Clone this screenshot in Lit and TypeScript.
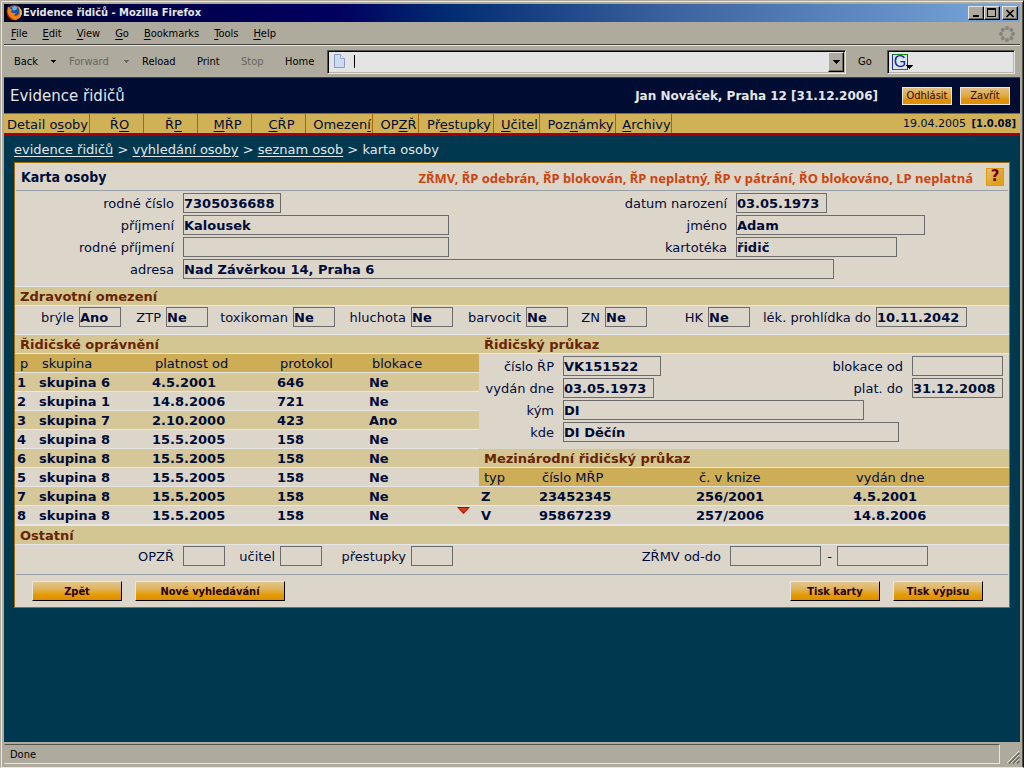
import { LitElement, html, css, svg } from "lit";

type Field = { id: string; label: string; value: string; size: string };

const MENU: [string, string, string][] = [
  ["", "F", "ile"],
  ["", "E", "dit"],
  ["", "V", "iew"],
  ["", "G", "o"],
  ["", "B", "ookmarks"],
  ["", "T", "ools"],
  ["", "H", "elp"],
];

const TABS: { text: [string, string, string]; width: number }[] = [
  { text: ["Detail o", "s", "oby"], width: 86 },
  { text: ["Ř", "O", ""], width: 54 },
  { text: ["Ř", "P", ""], width: 54 },
  { text: ["", "M", "ŘP"], width: 54 },
  { text: ["", "C", "ŘP"], width: 54 },
  { text: ["Omezen", "í", ""], width: 67 },
  { text: ["OP", "Z", "Ř"], width: 46 },
  { text: ["Př", "e", "stupky"], width: 75 },
  { text: ["", "U", "čitel"], width: 46 },
  { text: ["Poz", "n", "ámky"], width: 76 },
  { text: ["", "A", "rchivy"], width: 56 },
];

const HEALTH: Field[] = [
  { id: "bryle", label: "brýle", value: "Ano", size: "flag" },
  { id: "ztp", label: "ZTP", value: "Ne", size: "flag" },
  { id: "toxikoman", label: "toxikoman", value: "Ne", size: "flag" },
  { id: "hluchota", label: "hluchota", value: "Ne", size: "flag" },
  { id: "barvocit", label: "barvocit", value: "Ne", size: "flag" },
  { id: "zn", label: "ZN", value: "Ne", size: "flag" },
  { id: "hk", label: "HK", value: "Ne", size: "flag" },
  { id: "prohlidka", label: "lék. prohlídka do", value: "10.11.2042", size: "date" },
];

const GROUPS = [
  ["1", "skupina 6", "4.5.2001", "646", "Ne"],
  ["2", "skupina 1", "14.8.2006", "721", "Ne"],
  ["3", "skupina 7", "2.10.2000", "423", "Ano"],
  ["4", "skupina 8", "15.5.2005", "158", "Ne"],
  ["6", "skupina 8", "15.5.2005", "158", "Ne"],
  ["5", "skupina 8", "15.5.2005", "158", "Ne"],
  ["7", "skupina 8", "15.5.2005", "158", "Ne"],
  ["8", "skupina 8", "15.5.2005", "158", "Ne"],
];

const INTERNATIONAL = [
  ["Z", "23452345", "256/2001", "4.5.2001"],
  ["V", "95867239", "257/2006", "14.8.2006"],
];

const accel = ([a, b, c]: [string, string, string]) => html`${a}<u>${b}</u>${c}`;

const caret = html`<svg class="caret" width="7" height="4" viewBox="0 0 7 4" shape-rendering="crispEdges"><path d="M0 0h7v1H6v1H5v1H4v1H3V3H2V2H1V1H0z" fill="currentColor"/></svg>`;

class AppRoot extends LitElement {
  static styles = css`
    :host {
      --face: #aeaa9e;
      --light: #e6e6e6;
      --card: #dcd6ca;
      --band: #d4c693;
      --gold: #cdae56;
      --ink: #000c38;
      --ui: "DejaVu Sans Condensed", "DejaVu Sans", sans-serif;
      display: flex;
      flex-direction: column;
      box-sizing: border-box;
      min-height: 100vh;
      background: var(--face);
      border-style: solid;
      border-width: 1px;
      border-color: var(--face) #101010 var(--light) var(--face);
      box-shadow: inset 1px 1px 0 var(--light), inset -1px 0 0 #55534e;
      font: 13px/18px "DejaVu Sans", sans-serif;
      color: var(--ink);
      padding: 3px 3px 3px 3px;
    }
    * { box-sizing: border-box; }
    button, input { font: inherit; color: inherit; margin: 0; padding: 0; border-radius: 0; }
    a { color: inherit; }
    u { text-underline-offset: 2px; }

    .chrome { font: 11px/14px var(--ui); color: #000; }
    .titlebar {
      display: flex; align-items: center; height: 18px; padding: 0 2px;
      background: linear-gradient(90deg, #000020 0%, #000048 12%, #000060 33%, #002a70 43%, #3c64a0 66%, #7aa8dc 100%);
      color: var(--light);
    }
    .titlebar h1 { flex: 1; margin: 0; font: bold 11px/16px var(--ui); }
    .winbtn {
      width: 16px; height: 14px; background: var(--face); border: 1px solid;
      border-color: var(--light) #000 #000 var(--light); box-shadow: inset -1px -1px 0 #6c6a62;
      display: grid; place-items: center;
    }
    .winbtn.close { margin-left: 2px; }
    .menubar { display: flex; align-items: center; height: 24px; padding: 0 5px 0 7px; border-bottom: 1px solid var(--light); box-shadow: inset 0 -1px 0 #44423e; }
    .menubar nav { display: flex; gap: 15px; flex: 1; }
    .menubar a { text-decoration: none; }
    .toolbar { display: flex; align-items: center; height: 32px; padding: 0 5px 0 10px; border-bottom: 1px solid #44423e; }
    .tool { background: none; border: 0; text-align: left; white-space: nowrap; display: flex; align-items: center; justify-content: space-between; }
    .tool.off { color: #68665e; }
    .back { width: 42px; margin-right: 13px; }
    .forward { width: 60px; margin-right: 13px; }
    .reload { width: 55px; }
    .print { width: 44px; }
    .stop { width: 44px; }
    .home { width: 42px; }
    .go { width: 41px; padding-left: 12px; }
    .tool .caret { width: 5px; height: 3px; }
    .sunken {
      height: 24px; background: #e4e4e4; border: 1px solid; border-color: #55534e var(--light) var(--light) #55534e;
      box-shadow: inset 1px 1px 0 #000, inset -1px -1px 0 #b8b4a8; display: flex; align-items: center;
    }
    .sunken input { flex: 1; min-width: 0; border: 0; background: none; outline: 0; height: 18px; font: 12px/18px var(--ui); }
    .url { flex: 1; padding: 2px 1px 2px 5px; gap: 8px; }
    .caretline { width: 1px; height: 13px; background: #000; }
    .drop { width: 16px; height: 20px; background: var(--face); border: 1px solid; border-color: var(--light) #000 #000 var(--light); box-shadow: inset -1px -1px 0 #6c6a62; display: grid; place-items: center; }
    .search { width: 128px; padding-left: 4px; }
    .engine { width: 16px; height: 16px; border: 1px solid; border-color: #0a8a0a #c80000 #0a8a0a #1030a0; font: 16px/14px "Liberation Sans", sans-serif; color: #1020a0; text-align: center; background: #dde4ee; position: relative; }
    .engine .caret { position: absolute; right: -6px; bottom: 0; color: #000; }

    .page { flex: 1; display: flex; flex-direction: column; background: #003850; }
    .apphead { display: flex; align-items: center; height: 35px; padding: 0 10px 0 6px; background: #000c32; color: var(--light); }
    .apphead h2 { flex: 1; margin: 0; font: 15px/20px "DejaVu Sans", sans-serif; }
    .user { font: bold 12px/16px "DejaVu Sans", sans-serif; margin-right: 24px; }
    .small { width: 50px; height: 18px; font: 11px/14px var(--ui); border: 1px solid var(--light); color: #300400; background: linear-gradient(#e0c080, #e0a840 50%, #e09000 75%, #e09000); }
    .small + .small { margin-left: 8px; }
    .tabs { display: flex; height: 23px; background: #d0b155; border-top: 1px solid #a86800; border-bottom: 3px solid #a80000; }
    .tab { flex: none; display: flex; align-items: center; justify-content: center; padding: 2px 0 0 6px; border-right: 1px solid #a86800; text-decoration: none; white-space: pre; }
    .tab:first-child { padding-left: 2px; }
    .version { margin-left: auto; padding-right: 4px; font-size: 11px; line-height: 20px; white-space: nowrap; }
    .version b { margin-left: 2px; font-size: 10px; }
    .crumbs { height: 26px; padding: 5px 10px 0; color: var(--light); white-space: nowrap; }
    .crumbs a { text-underline-offset: 2px; }

    .card { margin: 0 10px; background: var(--card); border: 1px solid #a06c08; }
    .cardhead { display: flex; align-items: center; height: 28px; margin: 0 1px; padding: 0 4px 0 5px; border-bottom: 1px solid #98a0a6; }
    .cardhead h3 { margin: 0; flex: 1; font: bold 14px/18px var(--ui); padding-top: 1px; }
    .alert { margin: 0 13px 0 0; font: bold 13px/18px "Noto Sans", sans-serif; color: #cc4410; padding-top: 2px; white-space: nowrap; }
    .help { width: 18px; height: 18px; border: 1px solid #e09808; background: linear-gradient(135deg, #e0c080, #e0a020 70%); color: #700000; font: bold 15px/15px "DejaVu Sans", sans-serif; }
    .band { margin: 0; height: 20px; padding: 1px 0 0 5px; background: var(--band); border: solid var(--light); border-width: 1px 0; font: bold 13px/18px "DejaVu Sans", sans-serif; color: #682400; }
    .band.flush { height: 19px; border-top: 0; }
    label { white-space: nowrap; text-align: right; padding-top: 1px; }
    .box { height: 20px; border: 1px solid #6c6c6c; background: none; font-weight: bold; padding: 1px 0 0; outline: 0; min-width: 0; }
    .flag { width: 42px; } .date { width: 91px; } .number { width: 98px; } .name { width: 266px; }
    .first { width: 189px; } .file { width: 161px; } .address { width: 651px; max-width: 100%; }
    .issuer { width: 301px; } .place { width: 336px; }
    .form { display: grid; gap: 2px 9px; align-items: center; padding: 2px 0 7px; }
    .person { grid-template-columns: 159px 1fr auto 273px; }
    .licence { grid-template-columns: 75px 1fr auto 97px; }
    .cell { display: flex; }
    .wide { grid-column: 2 / -1; }
    .health { display: grid; grid-template-columns: 106fr 87fr 127fr 118fr 115fr 79fr 103fr 217fr 42fr; padding: 1px 0 7px; }
    .item { display: flex; justify-content: flex-end; align-items: center; gap: 5px; }
    .item.spaced { gap: 9px; }
    .split { display: grid; grid-template-columns: 464fr 530fr; }
    .col { min-width: 0; position: relative; }
    table { width: 100%; table-layout: fixed; border-spacing: 0; }
    th, td { height: 19px; padding: 2px 0 0 2px; border-bottom: 1px solid var(--light); text-align: left; line-height: 16px; white-space: nowrap; }
    th { background: var(--gold); font-weight: normal; padding-left: 5px; }
    td { font-weight: bold; }
    tbody tr:nth-child(odd) { background: #d6c799; }
    .more { position: absolute; right: 9px; bottom: 11px; width: 13px; height: 7px; border: 0; background: none; display: grid; }
    .other { display: grid; grid-template-columns: 210fr 97fr 131fr 368fr 107fr 81fr; padding: 1px 0 8px; }
    .actions { display: flex; margin: 0 1px; padding: 6px 25px 6px 16px; gap: 13px; border-top: 1px solid #98a0a6; }
    .action { width: 90px; height: 20px; padding-top: 1px; font: bold 11px/16px var(--ui); color: #280000; border: 1px solid; border-color: var(--light) #000 #000 var(--light); background: linear-gradient(#e0c890, #e0b050 45%, #e49c00 70%, #e08c00); }
    .action.long { width: 150px; }
    .push { margin-left: auto; }

    .status { display: flex; align-items: flex-start; height: 22px; padding-top: 2px; }
    .status p { flex: 1; margin: 0; height: 20px; padding: 3px 5px; border: 1px solid; border-color: #55534e var(--light) var(--light) var(--face); }
    .grip { margin: 7px 0 0 7px; }
  `;

  private box(f: Field) {
    return html`<input class="box ${f.size}" id=${f.id} .value=${f.value} readonly />`;
  }

  private pair(id: string, label: string, value: string, size: string, wide = false) {
    return html`<label for=${id}>${label}</label>
      <div class="cell ${wide ? "wide" : ""}">${this.box({ id, label, value, size })}</div>`;
  }

  private item(f: Field, spaced = false) {
    return html`<div class="item ${spaced ? "spaced" : ""}"><label for=${f.id}>${f.label}</label>${this.box(f)}</div>`;
  }

  private grid(widths: number[], heads: string[], rows: string[][]) {
    const total = widths.reduce((a, b) => a + b, 0);
    return html`<table>
      <colgroup>${widths.map((w) => html`<col style="width:${(w / total) * 100}%" />`)}</colgroup>
      <thead><tr>${heads.map((h) => html`<th>${h}</th>`)}</tr></thead>
      <tbody>${rows.map((r) => html`<tr>${r.map((c) => html`<td>${c}</td>`)}</tr>`)}</tbody>
    </table>`;
  }

  render() {
    return html`
      <header class="chrome">
        <div class="titlebar">
          <svg width="17" height="16" viewBox="0 0 17 16" aria-hidden="true">
            <circle cx="8.500" cy="7.500" r="7.300" fill="#d86010" />
            <circle cx="8.500" cy="6" r="5" fill="#2050a8" />
            <path d="M6 2l3-1 2.500 1.500L10 5 7 5.500z" fill="#68b0e0" />
            <path d="M2 1l1.500 2.500L6 4.500 5 7l2 1 3 .5-2 2 2.500 1 3-2L15 5.500l.8 3-1.800 4-4 2.700-4-.2-3.500-3L1 7z" fill="#f08018" />
            <path d="M12 1.500l3.500 3.500.3 4-2.300 4C14.500 9 14 5 12 1.500z" fill="#f8c020" />
            <path d="M1 4l1 5 3 4 4 2-4-.3L1.500 11 .5 7z" fill="#a82010" />
          </svg>
          <h1>Evidence řidičů - Mozilla Firefox</h1>
          <button class="winbtn" aria-label="Minimize"><svg width="12" height="10" shape-rendering="crispEdges"><path d="M3 7h6v2H3z" /></svg></button>
          <button class="winbtn" aria-label="Maximize"><svg width="12" height="10" shape-rendering="crispEdges"><path d="M1 0h9v9H1zM2 2v6h7V2z" fill-rule="evenodd" /></svg></button>
          <button class="winbtn close" aria-label="Close"><svg width="10" height="9"><path d="M1.500 1l7 7M8.500 1l-7 7" stroke="#000" stroke-width="1.700" /></svg></button>
        </div>
        <div class="menubar">
          <nav>${MENU.map((m) => html`<a href="#">${accel(m)}</a>`)}</nav>
          <svg width="16" height="16" viewBox="-8 -8 16 16" fill="#86847c" aria-hidden="true">
            ${[0, 45, 90, 135, 180, 225, 270, 315].map((a) => svg`<circle cx="0" cy="-6" r="2" transform="rotate(${a})" />`)}
          </svg>
        </div>
        <div class="toolbar">
          <button class="tool back">Back ${caret}</button>
          <button class="tool off forward">Forward ${caret}</button>
          <button class="tool reload">Reload</button>
          <button class="tool print">Print</button>
          <button class="tool off stop">Stop</button>
          <button class="tool home">Home</button>
          <div class="sunken url">
            <svg width="13" height="15" viewBox="0 0 13 15" aria-hidden="true">
              <path d="M1.500 .5h6l4 4v9h-10z" fill="#ccdcf0" stroke="#8c98c8" />
              <path d="M7.500 .5v4h4" fill="#e8f0fa" stroke="#98a8d0" />
            </svg>
            <span class="caretline"></span>
            <input aria-label="Address" />
            <button class="drop" aria-label="History">${caret}</button>
          </div>
          <button class="tool go">Go</button>
          <div class="sunken search"><span class="engine">G${caret}</span><input aria-label="Search" /></div>
        </div>
      </header>

      <main class="page">
        <div class="apphead">
          <h2>Evidence řidičů</h2>
          <span class="user">Jan Nováček, Praha 12 [31.12.2006]</span>
          <button class="small">Odhlásit</button>
          <button class="small">Zavřít</button>
        </div>
        <nav class="tabs">
          ${TABS.map((t) => html`<a class="tab" href="#" style="width:${t.width}px"><span>${accel(t.text)}</span></a>`)}
          <span class="version">19.04.2005 <b>[1.0.08]</b></span>
        </nav>
        <div class="crumbs">
          <a href="#">evidence řidičů</a> &gt; <a href="#">vyhledání osoby</a> &gt; <a href="#">seznam osob</a> &gt; karta osoby
        </div>

        <section class="card">
          <div class="cardhead">
            <h3>Karta osoby</h3>
            <p class="alert">ZŘMV, ŘP odebrán, ŘP blokován, ŘP neplatný, ŘP v pátrání, ŘO blokováno, LP neplatná</p>
            <button class="help">?</button>
          </div>
          <div class="form person">
            ${this.pair("rc", "rodné číslo", "7305036688", "number")}
            ${this.pair("narozeni", "datum narození", "03.05.1973", "date")}
            ${this.pair("prijmeni", "příjmení", "Kalousek", "name")}
            ${this.pair("jmeno", "jméno", "Adam", "first")}
            ${this.pair("rodne", "rodné příjmení", "", "name")}
            ${this.pair("kartoteka", "kartotéka", "řidič", "file")}
            ${this.pair("adresa", "adresa", "Nad Závěrkou 14, Praha 6", "address", true)}
          </div>
          <h4 class="band">Zdravotní omezení</h4>
          <div class="health">${HEALTH.map((f) => this.item(f))}</div>
          <div class="split">
            <div class="col">
              <h4 class="band">Řidičské oprávnění</h4>
              ${this.grid([22, 113, 125, 92, 112], ["p", "skupina", "platnost od", "protokol", "blokace"], GROUPS)}
              <button class="more" aria-label="Další">
                <svg width="13" height="7" viewBox="0 0 13 7"><path d="M0 0h13L6.500 7z" fill="#a80800" /><path d="M2 1h9L6.500 5.500z" fill="#d04020" /></svg>
              </button>
            </div>
            <div class="col">
              <h4 class="band">Řidičský průkaz</h4>
              <div class="form licence">
                ${this.pair("cislo", "číslo ŘP", "VK151522", "number")}
                ${this.pair("blokace", "blokace od", "", "date")}
                ${this.pair("vydan", "vydán dne", "03.05.1973", "date")}
                ${this.pair("platnost", "plat. do", "31.12.2008", "date")}
                ${this.pair("kym", "kým", "DI", "issuer", true)}
                ${this.pair("kde", "kde", "DI Děčín", "place", true)}
              </div>
              <h4 class="band flush">Mezinárodní řidičský průkaz</h4>
              ${this.grid([58, 157, 157, 158], ["typ", "číslo MŘP", "č. v knize", "vydán dne"], INTERNATIONAL)}
            </div>
          </div>
          <h4 class="band">Ostatní</h4>
          <div class="other">
            ${this.item({ id: "opzr", label: "OPZŘ", value: "", size: "flag" }, true)}
            ${this.item({ id: "ucitel", label: "učitel", value: "", size: "flag" })}
            ${this.item({ id: "prestupky", label: "přestupky", value: "", size: "flag" })}
            ${this.item({ id: "od", label: "ZŘMV od-do", value: "", size: "date" }, true)}
            ${this.item({ id: "do", label: "-", value: "", size: "date" })}
          </div>
          <div class="actions">
            <button class="action">Zpět</button>
            <button class="action long">Nové vyhledávání</button>
            <button class="action push">Tisk karty</button>
            <button class="action">Tisk výpisu</button>
          </div>
        </section>
      </main>

      <footer class="status chrome">
        <p>Done</p>
        <svg class="grip" width="13" height="13" viewBox="0 0 13 13" aria-hidden="true">
          <path d="M0 12L12 0M4 12l8-8M8 12l4-4" stroke="#e6e6e6" />
          <path d="M2 12.500L12.500 2M6 12.500L12.500 6M10 12.500l2.500-2.500" stroke="#66645c" stroke-width="1.500" />
        </svg>
      </footer>
    `;
  }
}

customElements.define("app-root", AppRoot);
